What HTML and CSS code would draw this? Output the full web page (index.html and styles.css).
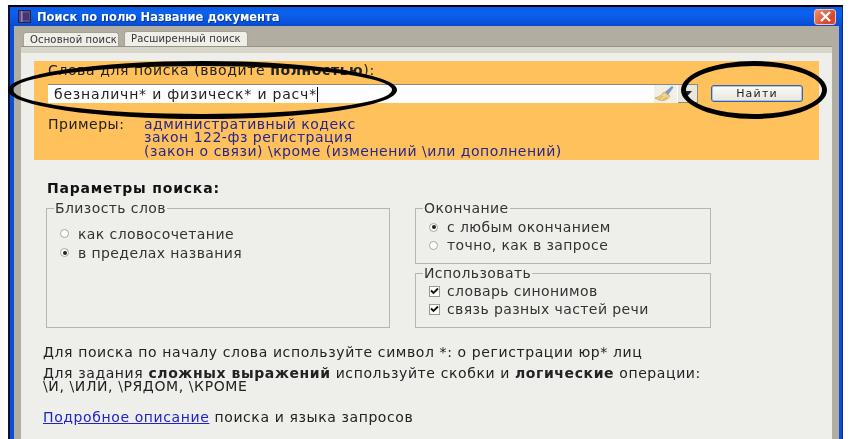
FILE: index.html
```html
<!DOCTYPE html>
<html lang="ru">
<head>
<meta charset="utf-8">
<title>Поиск по полю Название документа</title>
<link rel="stylesheet" href="styles.css">
</head>
<body>
<div class="window">
  <div class="titlebar">
    <svg class="appicon" width="13" height="13" viewBox="0 0 13 13"><rect x="0.5" y="0.5" width="12" height="12" fill="#5a4a8c" stroke="#2b2140"/><rect x="3" y="1" width="1.5" height="11" fill="#8f86b5"/><rect x="5" y="3" width="6" height="7" fill="#43356e"/></svg>
    <span class="title">Поиск по полю Название документа</span>
    <span class="close"><svg width="13" height="11" viewBox="0 0 13 11"><path d="M2 1l9 9M11 1l-9 9" stroke="#fff" stroke-width="2.4"/></svg></span>
  </div>
  <div class="body">
    <div class="tabs">
      <div class="tab">Основной поиск</div>
      <div class="tab active">Расширенный поиск</div>
    </div>
    <div class="panel">
      <div class="search">
        <div class="search-label">Слова для поиска (вводите <b>полностью</b>):</div>
        <div class="search-row">
          <div class="input">
            <span class="query">безналичн* и физическ* и расч*</span><span class="caret"></span>
            <span class="broom"><svg width="22" height="18" viewBox="0 0 22 18"><path d="M1 13c4-1 7-3 9-6l6 4c-1 2-3 3-5 4-3 1-7 0-10-2z" fill="#f0d48a" stroke="#c49a4a" stroke-width=".7"/><path d="M11 7l7-6 1.5 1.5-5.500 7.500z" fill="#7d9ac0"/><path d="M5 14l4-3M9 15l4-3" stroke="#c49a4a" stroke-width=".7"/></svg></span>
            <span class="drop"><svg width="9" height="5" viewBox="0 0 9 5"><path d="M0 0h9L4.500 5z" fill="#222"/></svg></span>
          </div>
          <button class="find" type="button">Найти</button>
        </div>
        <div class="examples">
          <div class="examples-label">Примеры:</div>
          <div class="examples-list">
            <div>административный кодекс</div>
            <div>закон 122-фз регистрация</div>
            <div>(закон о связи) \кроме (изменений \или дополнений)</div>
          </div>
        </div>
      </div>
      <div class="params-title">Параметры поиска:</div>
      <div class="params">
        <fieldset class="group group-near">
          <legend>Близость слов</legend>
          <div class="opt"><span class="radio"></span>как словосочетание</div>
          <div class="opt"><span class="radio on"></span>в пределах названия</div>
        </fieldset>
        <div class="params-right">
          <fieldset class="group group-end">
            <legend>Окончание</legend>
            <div class="opt"><span class="radio on"></span>с любым окончанием</div>
            <div class="opt"><span class="radio"></span>точно, как в запросе</div>
          </fieldset>
          <fieldset class="group group-use">
            <legend>Использовать</legend>
            <div class="opt"><span class="check"><svg width="9" height="8" viewBox="0 0 9 8"><path d="M1 3.500l2.500 2.500L8 1.500" fill="none" stroke="#111" stroke-width="1.800"/></svg></span>словарь синонимов</div>
            <div class="opt"><span class="check"><svg width="9" height="8" viewBox="0 0 9 8"><path d="M1 3.500l2.500 2.500L8 1.500" fill="none" stroke="#111" stroke-width="1.800"/></svg></span>связь разных частей речи</div>
          </fieldset>
        </div>
      </div>
      <div class="help">
        <p class="help-a">Для поиска по началу слова используйте символ *: о регистрации юр* лиц</p>
        <p class="help-b">Для задания <b>сложных выражений</b> используйте скобки и <b>логические</b> операции:<br>\И, \ИЛИ, \РЯДОМ, \КРОМЕ</p>
        <p class="help-c"><a href="#">Подробное описание</a> поиска и языка запросов</p>
      </div>
    </div>
  </div>
</div>
<div class="oval oval-input"></div>
<div class="oval oval-button"></div>
</body>
</html>
```
FILE: styles.css
```css
* { box-sizing: border-box; }
html, body { margin: 0; height: 100%; }
body { background: #fff; overflow: hidden; position: relative; padding: 5px 0 0 8px; font-family: "DejaVu Sans", sans-serif; color: #222; }
.window { width: 835px; height: 434px; background: #0a4fdc; border-top: 2px solid #000; border-left: 2px solid #101030; border-right: 1px solid #102a80; padding: 0 3px 0 4px; display: flex; flex-direction: column; filter: blur(0.35px); }
.titlebar { height: 19px; margin: 0 -3px 0 -4px; padding: 0 6px 0 8px; display: flex; align-items: center; background: linear-gradient(#0a5ae6, #0b62ee 30%, #0850d8 90%, #0a48c8); }
.appicon { flex: none; margin-right: 6px; }
.title { color: #fff; font: bold 11.500px "DejaVu Sans", sans-serif; text-shadow: 1px 1px 0 #083a9c; white-space: nowrap; }
.close { margin-left: auto; width: 22px; height: 16px; border: 1px solid #f0c8b8; border-radius: 3px; background: linear-gradient(135deg, #f0906c, #d9482a 70%); display: flex; align-items: center; justify-content: center; }
.body { flex: 1; min-height: 0; background: #b1aea1; padding: 5px 7px 0 7px; display: flex; flex-direction: column; }
.tabs { display: flex; height: 15px; padding-left: 2px; align-items: flex-end; }
.tab { height: 14px; padding: 0 1px 0 6px; margin-right: 5px; background: #efeee8; border: 1px solid #a5a398; border-bottom: 0; border-radius: 3px 3px 0 0; font-size: 10px; line-height: 13px; letter-spacing: 0.15px; white-space: nowrap; color: #333; }
.tab.active { height: 15px; line-height: 14px; padding: 0 6px; margin-right: 0; }
.panel { flex: 1; min-height: 0; background: #eeeeea; border-top: 1px solid #96948a; box-shadow: inset 0 6px 0 #d8d6c8; padding: 14px 13px 0; }
.search { height: 99px; background: #ffc15c; padding: 0 14px; display: flex; flex-direction: column; }
.search-label { height: 23px; padding-top: 2px; font-size: 14px; line-height: 15px; letter-spacing: 0.6px; white-space: nowrap; }
.search-row { display: flex; align-items: center; height: 19px; }
.input { width: 650px; height: 19px; flex: none; background: #fff; border-top: 1px solid #8a8a80; display: flex; align-items: center; padding-left: 6px; font-size: 14px; }
.query { letter-spacing: 0.8px; white-space: nowrap; color: #222; }
.caret { width: 1px; height: 15px; background: #000; }
.broom { margin-left: auto; width: 23px; height: 18px; background: #f1efe6; display: flex; align-items: center; }
.drop { width: 20px; height: 18px; background: #e9e7dc; border-right: 1px solid #8a8a80; border-bottom: 1px solid #8a8a80; display: flex; align-items: center; justify-content: center; margin-left: 1px; }
.find { flex: none; margin-left: 13px; width: 92px; height: 17px; padding: 0; background: linear-gradient(#fbfbf8, #e8e6dc); border: 1px solid #39639e; border-radius: 3px; box-shadow: inset 0 0 0 1px #a8c4ea; font: 11px "DejaVu Sans", sans-serif; letter-spacing: 1.2px; color: #222; }
.examples { display: flex; margin-top: 14.500px; font-size: 14px; line-height: 13.500px; letter-spacing: 0.5px; }
.examples-label { width: 96px; flex: none; }
.examples-list { color: #26268c; white-space: nowrap; }
.params-title { margin: 21px 0 0 13px; font-weight: bold; font-size: 14px; line-height: 15px; letter-spacing: 0.8px; color: #111; }
.params { display: flex; align-items: stretch; margin: 5px 0 0 12px; }
.group { margin: 0; min-width: 0; border: 1px solid #b8b6aa; padding: 0; font-size: 14px; letter-spacing: 0.4px; color: #333; }
.group legend { padding: 0 1px; margin-left: 7px; line-height: 14px; white-space: nowrap; }
.group-near { width: 344px; height: 127px; padding-top: 9px; }
.params-right { margin-left: 25px; width: 296px; display: flex; flex-direction: column; gap: 2px; }
.group-end { height: 63px; padding-top: 3px; }
.group-use { height: 62px; padding-top: 2px; }
.opt { height: 18px; padding-left: 13px; display: flex; align-items: center; white-space: nowrap; }
.group-near .opt { height: 19px; }
.radio { width: 9px; height: 9px; flex: none; margin-right: 9px; border-radius: 50%; background: #fff; border: 1px solid #a8a89c; position: relative; }
.radio.on::after { content: ""; position: absolute; inset: 1.500px; border-radius: 50%; background: #222; }
.check { width: 11px; height: 11px; flex: none; margin-right: 7px; background: #fff; border: 1px solid #9a9a8e; display: flex; align-items: center; justify-content: center; }
.help { margin: 18px 0 0 9px; font-size: 14px; line-height: 13px; letter-spacing: 0.6px; color: #222; }
.help p { margin: 0; white-space: nowrap; }
.help-b { margin-top: 8px !important; }
.help-c { margin-top: 18px !important; }
.help a { color: #2222cc; }
.oval { position: absolute; border: 5px solid #000; border-radius: 50%; background: transparent; }
.oval-input { left: 8px; top: 61px; width: 389px; height: 58px; }
.oval-button { left: 681px; top: 61px; width: 146px; height: 58px; }
```
